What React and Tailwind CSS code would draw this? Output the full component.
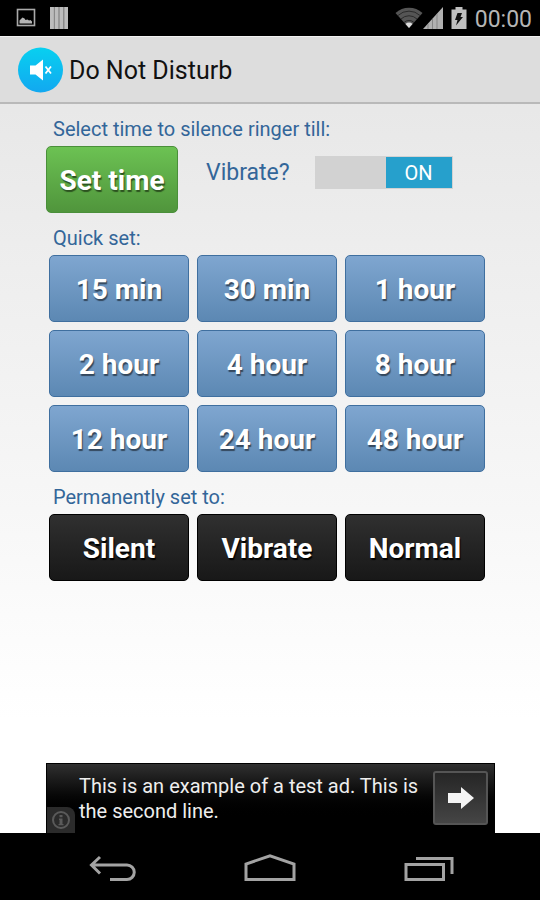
import React, { useState } from 'react';

const quickTimes = ['15 min', '30 min', '1 hour', '2 hour', '4 hour', '8 hour', '12 hour', '24 hour', '48 hour'];
const modes = ['Silent', 'Vibrate', 'Normal'];

const StatusBar = () => {
    return (
        <div className="flex h-9 items-center justify-between bg-black pl-4 pr-2 text-[#b5b5b5]">
            <div className="flex items-center gap-[14px]">
                <svg className="h-5 w-5" viewBox="0 0 20 20">
                    <rect x="1.5" y="1.5" width="17" height="16" fill="none" stroke="#aaa" strokeWidth="1.6" />
                    <path d="M3.500 15.500v-3l1.500-1.500 1.500-1.500 2 1 1 1.500 2-.500 1.500 1 1.500-.500 1.500 1.500v2z" fill="#b5b5b5" />
                </svg>
                <svg className="h-[22px] w-[18px]" viewBox="0 0 18 22">
                    <path d="M0 0h18v22H0z" fill="#8a8a8a" />
                    <path d="M0 0h3.800v22H0zM5 0h3.300v22H5zM9.700 0h3.300v22H9.700zM14.500 0H18v22h-3.500z" fill="#bdbdbd" />
                </svg>
            </div>

            <div className="flex items-center">
                <svg className="h-6 w-7" viewBox="0 0 28 24">
                    <path d="M14 22L0.500 7a20 20 0 0 1 27 0z" fill="#555" />
                    <path d="M3 9.500a16 16 0 0 1 22 0M6 13a11.500 11.500 0 0 1 16 0M9 16.500a7 7 0 0 1 10 0" fill="none" stroke="#2a2a2a" strokeWidth="1" />
                    <path d="M14 22l-3.500-4a5 5 0 0 1 7 0z" fill="#ddd" />
                </svg>
                <svg className="h-6 w-5" viewBox="0 0 20 24">
                    <path d="M0 23L20 1v22z" fill="#b0b0b0" />
                    <path d="M5 18v5M9.500 13v10M14 8v15" stroke="#858585" strokeWidth="1" />
                </svg>
                <svg className="ml-2 h-6 w-4" viewBox="0 0 16 24">
                    <path d="M4.500 1h7v2.500H15.500V23H0.500V3.500h4z" fill="#c0c0c0" />
                    <path d="M6.500 7h4.500l-1.500 4h2.500L5 19.500l1.500-5.500H4z" fill="#111" />
                </svg>
                <span className="ml-2 pt-[3px] text-[23px] leading-6">00:00</span>
            </div>
        </div>
    );
};

const Header = () => {
    return (
        <header className="flex h-[68px] items-center gap-[6px] border-b-2 border-t border-b-[#b9b9b9] border-t-[#f2f2f2] bg-[#dddddd] pl-[18px]">
            <svg className="h-[46px] w-[45px]" viewBox="0 0 45 46">
                <defs>
                    <linearGradient id="logo" x1="0" y1="0" x2="0" y2="1">
                        <stop offset="0" stopColor="#08d0f0" />
                        <stop offset="1" stopColor="#12a8f0" />
                    </linearGradient>
                </defs>
                <circle cx="22.500" cy="23" r="22.500" fill="url(#logo)" />
                <path d="M12 18.500h5.500L25 12.500v21l-7.500-6H12z" fill="#fff" />
                <path d="M27.500 19.500l5.500 7M33 19.500l-5.500 7" stroke="#fff" strokeWidth="1.800" />
            </svg>
            <h1 className="pt-[2px] text-[25px] leading-8 text-[#111]">Do Not Disturb</h1>
        </header>
    );
};

const BlueButton = ({ children }) => {
    return (
        <button
            type="button"
            className="h-[67px] rounded-[5px] border border-[#3f6f9f] bg-linear-to-b from-[#7fa6d0] to-[#5c88b3] pt-[3px] text-[28px] font-bold text-white text-shadow-[1px_2px_1px_#33475c]"
        >
            {children}
        </button>
    );
};

const BlackButton = ({ children }) => {
    return (
        <button
            type="button"
            className="h-[67px] rounded-[5px] border border-black bg-linear-to-b from-[#303030] to-[#181818] pt-[3px] text-[28px] font-bold text-white text-shadow-[1px_2px_1px_#000]"
        >
            {children}
        </button>
    );
};

const VibrateSwitch = () => {
    const [vibrate, setVibrate] = useState(true);

    return (
        <label className="flex cursor-pointer items-center gap-[25px] text-[23px] leading-8 text-[#336699]">
            Vibrate?
            <input
                type="checkbox"
                role="switch"
                className="sr-only"
                checked={vibrate}
                onChange={(e) => setVibrate(e.target.checked)}
            />
            <span className={vibrate ? 'flex w-[138px] justify-end bg-[#d2d2d2] p-px' : 'flex w-[138px] justify-start bg-[#d2d2d2] p-px'}>
                <span
                    className={
                        vibrate
                            ? 'h-[31px] w-[66px] bg-[#26a0cc] text-center text-[20px] leading-8 text-white'
                            : 'h-[31px] w-[66px] bg-[#999999] text-center text-[20px] leading-8 text-white'
                    }
                >
                    {vibrate ? 'ON' : 'OFF'}
                </span>
            </span>
        </label>
    );
};

const Ad = () => {
    return (
        <aside className="ml-[46px] mr-[45px] flex h-[70px] border border-b-0 border-black bg-linear-to-b from-[#303030] to-black to-80%">
            <button type="button" aria-label="Ad info" className="flex h-[26px] w-7 shrink-0 items-center justify-center self-end rounded-tr-lg bg-[#2b2b2b]">
                <svg className="h-5 w-5" viewBox="0 0 20 20">
                    <circle cx="10" cy="10" r="8" fill="none" stroke="#5a5a5a" strokeWidth="2" />
                    <path d="M8.500 5h3v2.200h-3zM8 8.500h3.500V14h1v1.200H7.500V14h1v-4H8z" fill="#5a5a5a" />
                </svg>
            </button>
            <p className="flex-1 pl-1 pt-[10px] text-[20px] leading-[25px] text-[#eeeeee]">
                This is an example of a test ad. This is the second line.
            </p>
            <button type="button" aria-label="Open ad" className="mr-[6px] mt-[7px] flex h-[54px] w-[55px] shrink-0 items-center justify-center rounded-[3px] border-2 border-[#555555] bg-linear-to-b from-[#262626] to-[#454545]">
                <svg className="h-6 w-7" viewBox="0 0 28 24">
                    <path d="M1 7h13V1l13 11-13 11v-6H1z" fill="#f4f4f4" />
                </svg>
            </button>
        </aside>
    );
};

const NavBar = () => {
    return (
        <nav className="flex h-[67px] items-center justify-between bg-black pl-[88px] pr-[86px] pt-[6px]">
            <button type="button" aria-label="Back">
                <svg className="h-8 w-12" viewBox="0 0 48 32" fill="none" stroke="#a3a3a3" strokeWidth="3">
                    <path d="M12 3L3.500 11l8.500 8.500M3.500 11H39a7 7 0 0 1 0 14.500H22" />
                </svg>
            </button>
            <button type="button" aria-label="Home">
                <svg className="h-8 w-[52px]" viewBox="0 0 52 32" fill="none" stroke="#a3a3a3" strokeWidth="3">
                    <path d="M2 25.500V10L26 1.800 50 10v15.500z" />
                </svg>
            </button>
            <button type="button" aria-label="Recent apps">
                <svg className="h-8 w-[50px]" viewBox="0 0 50 32" fill="none" stroke="#a3a3a3" strokeWidth="3">
                    <path d="M2 10.500h37.500v15H2zM12 4.500h36V20" />
                </svg>
            </button>
        </nav>
    );
};

const App = () => {
    return (
        <div className="flex min-h-screen flex-col bg-linear-to-b from-[#e4e4e4] to-white to-80% font-['Roboto',sans-serif]">
            <StatusBar />
            <Header />

            <main className="flex-1 pl-[49px] pr-[55px] pt-[11px]">
                <h2 className="pl-1 text-[20px] leading-7 text-[#336699]">Select time to silence ringer till:</h2>
                <div className="-ml-[3px] mt-[3px] flex items-start gap-7">
                    <button
                        type="button"
                        className="h-[67px] w-[132px] rounded-[5px] border border-[#4a8f3a] bg-linear-to-b from-[#6cc253] to-[#50953c] pt-[3px] text-[28px] font-bold text-white text-shadow-[1px_2px_1px_#2c5220]"
                    >
                        Set time
                    </button>
                    <div className="pt-[10px]">
                        <VibrateSwitch />
                    </div>
                </div>

                {/* Quick timers */}
                <h2 className="mt-[11px] pl-1 text-[20px] leading-7 text-[#336699]">Quick set:</h2>
                <div className="mt-[3px] grid grid-cols-3 gap-2">
                    {quickTimes.map((time) => (
                        <BlueButton key={time}>{time}</BlueButton>
                    ))}
                </div>

                {/* Permanent modes */}
                <h2 className="mt-[11px] pl-1 text-[20px] leading-7 text-[#336699]">Permanently set to:</h2>
                <div className="mt-[3px] grid grid-cols-3 gap-2">
                    {modes.map((mode) => (
                        <BlackButton key={mode}>{mode}</BlackButton>
                    ))}
                </div>
            </main>

            <Ad />
            <NavBar />
        </div>
    );
};

export default App;
